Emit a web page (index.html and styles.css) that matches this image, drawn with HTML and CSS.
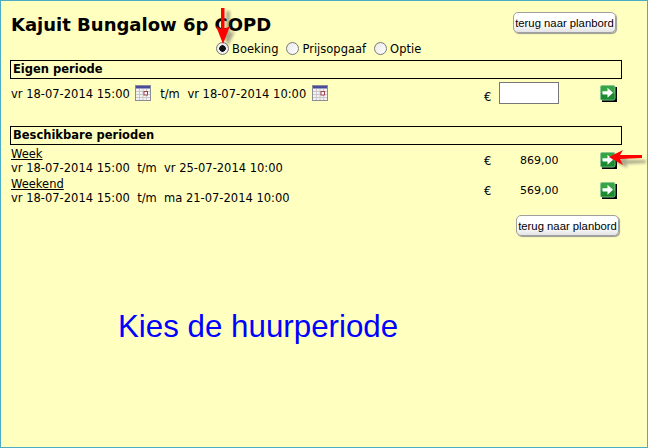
FILE: index.html
```html
<!DOCTYPE html>
<html>
<head>
  <title>Kajuit Bungalow 6p COPD</title>
  <link rel="stylesheet" href="styles.css">
</head>
<body>

<svg width="0" height="0" class="defs">
  <defs>
    <symbol id="cal" viewBox="0 0 16 16">
      <rect x="0.5" y="0.5" width="15" height="15" fill="#f4f2f0" stroke="#8c8c94"/>
      <rect x="1" y="1" width="14" height="2.5" fill="#4a4a9c"/>
      <path d="M1 6.5h14M1 9.5h14M1 12.5h14M4.5 4v11M8 4v11M11.5 4v11" stroke="#c8c8cc" fill="none"/>
      <rect x="9" y="6.5" width="3.5" height="3.5" fill="#fff" stroke="#a04048"/>
    </symbol>
    <symbol id="go" viewBox="0 0 17 17">
      <rect x="2" y="2" width="15" height="15" fill="#000"/>
      <rect x="0.5" y="0.5" width="14.5" height="14.5" rx="1.5" fill="#35a544" stroke="#8cc596"/>
      <rect x="1" y="8.5" width="13.5" height="6" fill="#1c8a30"/>
      <path d="M2.5 6.2h5V2.8L13 7.8 7.5 12.8V9.4h-5z" fill="#fff"/>
    </symbol>
    <filter id="soft"><feGaussianBlur stdDeviation="1.5"/></filter>
  </defs>
</svg>

<div class="page">
  <div class="top">
    <h1>Kajuit Bungalow 6p COPD</h1>
    <button class="back" type="button">terug naar planbord</button>
  </div>

  <div class="choice">
    <label><input type="radio" name="soort" checked> Boeking</label>
    <label><input type="radio" name="soort"> Prijsopgaaf</label>
    <label><input type="radio" name="soort"> Optie</label>
  </div>

  <div class="head">Eigen periode</div>
  <div class="row own">
    <div class="dates">
      vr 18-07-2014 15:00
      <svg class="cal"><use href="#cal"/></svg>
      <span class="tm">t/m</span>
      vr 18-07-2014 10:00
      <svg class="cal"><use href="#cal"/></svg>
    </div>
    <div class="euro">€</div>
    <div class="amount"><input type="text" class="price"></div>
    <svg class="go"><use href="#go"/></svg>
  </div>

  <div class="head second">Beschikbare perioden</div>
  <div class="row first">
    <div class="dates">
      <a href="#">Week</a><br>
      vr 18-07-2014 15:00&nbsp; t/m&nbsp; vr 25-07-2014 10:00
    </div>
    <div class="euro">€</div>
    <div class="amount sum">869,00</div>
    <svg class="go"><use href="#go"/></svg>
  </div>
  <div class="row">
    <div class="dates">
      <a href="#">Weekend</a><br>
      vr 18-07-2014 15:00&nbsp; t/m&nbsp; ma 21-07-2014 10:00
    </div>
    <div class="euro">€</div>
    <div class="amount sum">569,00</div>
    <svg class="go"><use href="#go"/></svg>
  </div>

  <div class="bottom">
    <button class="back" type="button">terug naar planbord</button>
  </div>

  <!-- annotations on top of the screenshot -->
  <svg class="mark mark-down" width="30" height="46" viewBox="0 0 30 46">
    <path d="M7 3h4v22l5-2-7 15-7-15 5 2z" fill="#555" opacity=".5" filter="url(#soft)" transform="translate(4 2)"/>
    <path d="M6 2h3.5v21l5.5-3-7 18-7-18 5 3z" fill="#f00"/>
  </svg>
  <svg class="mark mark-left" width="46" height="24" viewBox="0 0 46 24">
    <path d="M3 9l15-5-2 4 20 0v3l-20 1 2 4z" fill="#555" opacity=".5" filter="url(#soft)" transform="translate(2 4)"/>
    <path d="M1 9L15 2l-3 5 22 0v3l-22 1 3 6z" fill="#f00"/>
  </svg>
  <div class="caption">Kies de huurperiode</div>
</div>

</body>
</html>
```

FILE: styles.css
```css
html, body {
  margin: 0;
  padding: 0;
}
body {
  font-family: "DejaVu Sans", Verdana, sans-serif;
  font-size: 11.5px;
  color: #000;
}
.defs {
  position: absolute;
}
.page {
  position: relative;
  box-sizing: border-box;
  width: 648px;
  height: 448px;
  padding: 11px 25px 0 9px;
  background: #ffffc0;
  border: 1px solid #4bacc6;
}
.top {
  display: flex;
  justify-content: space-between;
  align-items: flex-start;
  padding-right: 6px;
}
h1 {
  margin: 3px 0 0 1px;
  font-size: 18px;
  line-height: 20px;
}
.back {
  width: 103px;
  height: 21px;
  padding: 0;
  font-family: "Liberation Sans", Arial, sans-serif;
  font-size: 11.3px;
  color: #000;
  background: linear-gradient(#fff 55%, #e4e4e4);
  border: 1px solid #a0a0a0;
  border-radius: 5px;
  box-shadow: 1px 1px 1px #999;
}
.choice {
  display: flex;
  gap: 8px;
  margin: 5px 0 0 206px;
  height: 17px;
  align-items: center;
}
.choice label {
  display: flex;
  align-items: center;
  gap: 3px;
}
.choice input {
  appearance: none;
  box-sizing: border-box;
  width: 13px;
  height: 13px;
  margin: 0;
  background: linear-gradient(135deg, #e8e8e8, #fff);
  border: 1px solid #777;
  border-radius: 50%;
}
.choice input:checked {
  background: radial-gradient(circle, #111 0, #111 3px, #eee 3.5px);
}
.head {
  box-sizing: border-box;
  height: 19px;
  margin-top: 3px;
  padding-left: 2px;
  font-weight: bold;
  line-height: 17px;
  border: 1px solid #000;
}
.second {
  margin-top: 19px;
}
.row {
  display: flex;
  align-items: center;
  height: 30px;
  padding-left: 1px;
  line-height: 14px;
}
.first {
  margin-top: 1px;
}
.own {
  height: 28px;
}
.own .euro {
  margin-top: 8px;
}
.own .go {
  margin: 1px 0 0;
}
.dates {
  width: 472px;
}
.dates a {
  color: #000;
}
.cal {
  width: 16px;
  height: 16px;
  margin: 0 2px;
  vertical-align: -3px;
}
.tm {
  margin: 0 4px 0 3px;
}
.euro {
  width: 15px;
  padding-left: 1px;
}
.amount {
  width: 101px;
}
.sum {
  width: 77px;
  padding-left: 21px;
  margin-right: 3px;
  font-size: 11px;
}
.price {
  box-sizing: border-box;
  display: block;
  width: 60px;
  height: 22px;
  background: #fff;
  border: 1px solid #777;
}
.go {
  flex: none;
  width: 17px;
  height: 17px;
  margin-bottom: 2px;
}
.bottom {
  display: flex;
  justify-content: flex-end;
  margin-top: 9px;
  padding-right: 3px;
}
.mark {
  position: absolute;
}
.mark-down {
  left: 214px;
  top: 5px;
}
.mark-left {
  left: 607px;
  top: 147px;
}
.caption {
  position: absolute;
  left: 117px;
  top: 308px;
  font-family: "Liberation Sans", Arial, sans-serif;
  font-size: 31.3px;
  color: #0000ff;
}
```
